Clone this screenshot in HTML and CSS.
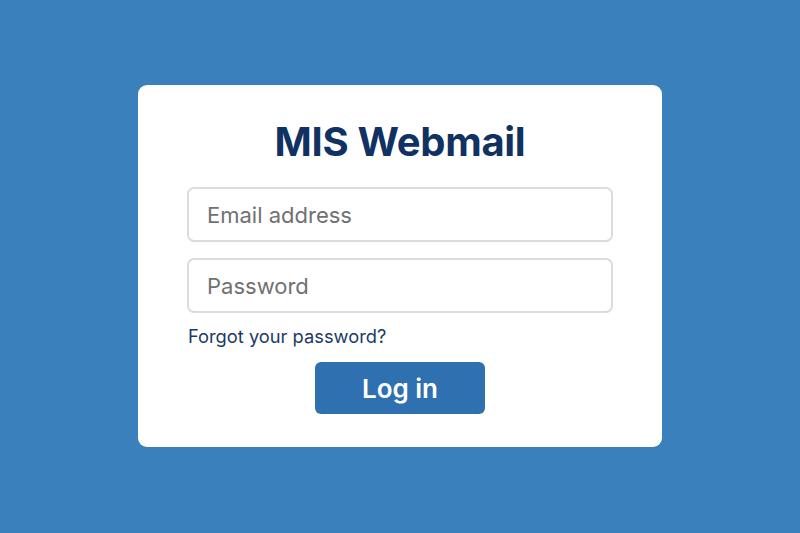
FILE: index.html
```html
<!DOCTYPE html>
<html lang="en">
<head>
<meta charset="utf-8">
<title>MIS Webmail</title>
<link rel="stylesheet" href="styles.css">
</head>
<body>
<main class="page">
  <form class="card" onsubmit="return false;">
    <h1 class="title">MIS Webmail</h1>
    <input class="field field-email" type="text" placeholder="Email address">
    <input class="field field-password" type="password" placeholder="Password">
    <a class="forgot" href="#">Forgot your password?</a>
    <div class="actions">
      <button class="login" type="submit">Log in</button>
    </div>
  </form>
</main>
</body>
</html>
```

FILE: styles.css
```css
* { box-sizing: border-box; }
html, body {
  margin: 0;
  padding: 0;
  height: 100%;
}
body {
  background: #3a80bd;
  font-family: Inter, "Liberation Sans", sans-serif;
}
.page {
  height: 533px;
  display: flex;
  justify-content: center;
  align-items: flex-start;
  padding-top: 85px;
}
.card {
  width: 524px;
  height: 362px;
  background: #ffffff;
  border-radius: 9px;
  padding: 31px 49px 33px;
  display: flex;
  flex-direction: column;
}
.title {
  margin: 0 0 19px;
  font-size: 40px;
  line-height: 52px;
  font-weight: 700;
  color: #0f3262;
  text-align: center;
  letter-spacing: -0.3px;
}
.field {
  width: 426px;
  height: 55px;
  border: 2px solid #dcdcdc;
  border-radius: 7px;
  padding: 0 18px;
  font-family: Inter, "Liberation Sans", sans-serif;
  font-size: 22px;
  color: #333;
  background: #fff;
  outline: none;
}
.field::placeholder { color: #717171; }
.field-email { margin-bottom: 16px; }
.forgot {
  margin-top: 12px;
  align-self: flex-start;
  font-size: 18.3px;
  line-height: 22px;
  color: #1b3a68;
  text-decoration: none;
  padding-left: 1px;
}
.actions {
  margin-top: 15px;
  display: flex;
  justify-content: center;
}
.login {
  width: 170px;
  height: 52px;
  border: none;
  border-radius: 6px;
  background: #2f70b1;
  color: #ffffff;
  font-family: Inter, "Liberation Sans", sans-serif;
  font-size: 26px;
  font-weight: 600;
  cursor: pointer;
  padding: 0;
}
```
